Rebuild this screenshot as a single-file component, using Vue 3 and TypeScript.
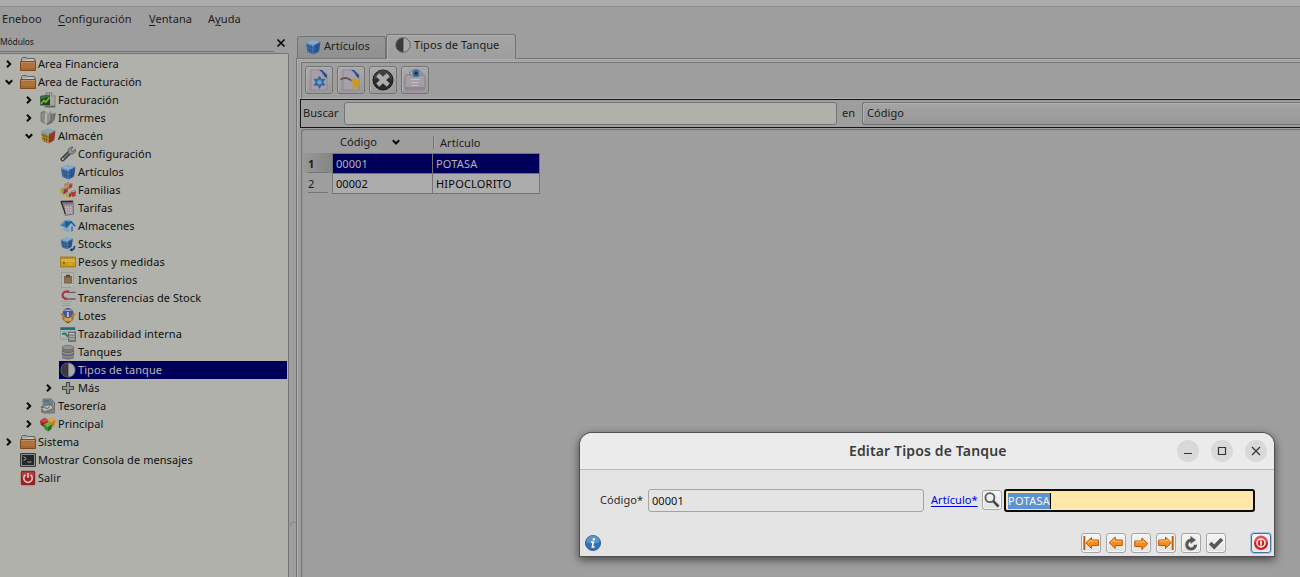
<script setup lang="ts">
interface TreeRow {
  label: string
  icon: string
  level: number
  arrow?: 'right' | 'down'
  selected?: boolean
}

const cubes = (left: string, top: string, right: string, line: string, shine: string): string =>
  `<path d="M.8 3.600 8.800 6.200v9.300L2.300 13z" fill="${left}"/><path d="M.8 3.600 7.500.8l8 2L8.800 6.200z" fill="${top}"/><path d="M8.800 6.200l6.700-3.400-1.300 9.400-5.400 3.300z" fill="${right}"/>` +
  `<path d="M1.300 6.700 8.800 9.300l6.300-3.400M1.800 9.900l7 2.600 5.900-3.400M3.500 4.500l1.100 9.300M6.100 5.300l.6 9.400M11.200 5v9M13.400 3.900l-.9 9.300" stroke="${line}" stroke-width=".7" fill="none"/>` +
  `<path d="M3 2.700l8 2.300M5.300 1.700l8 2.200M3.500 4.500l6.500-3M6.100 5.300l6.700-3.200M1.300 4.200l7.500 2.600" stroke="${shine}" stroke-width=".5" fill="none"/>`

const folder =
  '<path d="M1.500 6V2.500l1-1h4l.8 1h7l.7.8V6" fill="#a7a7a0" stroke="#62625e"/><path d="M3 4.500h11M8 3.500h5" stroke="#c4c4be"/><path d="M.5 5.500h15v9H.5z" fill="#ad733d" stroke="#85461a"/><path d="M1 6.500h14" stroke="#c28c58"/><path d="M1 13h14" stroke="#a05e27"/>'

const half =
  '<circle cx="8" cy="8" r="7.300" fill="#a9a9a9" stroke="#4b4b4b" stroke-width=".7"/><path d="M8 1a7 7 0 0 0 0 14z" fill="#3b3b3b"/><path d="M8 1v14" stroke="#2b2b2b" stroke-width=".7"/>'

const blue = cubes('#4673ab', '#6f9dc4', '#365f9e', '#234a82', '#9cbcd2')

const icons: Record<string, string> = {
  folder,
  half,
  blue,
  store: cubes('#b8942e', '#6796b0', '#a82f2c', '#6b4a22', '#a5bcc2'),
  invoice:
    '<path d="M6 .8h5.500l3.500 3V15H6z" fill="#a3a5a2" stroke="#686a68" stroke-width=".7"/><path d="M11.500.8v3H15" fill="#c6c6c2" stroke="#686a68" stroke-width=".6"/><path d="M.3 4 10 2.800v10.500L.3 13.500z" fill="#174a20"/><path d="M.3 4 10 2.800v2L.3 7.500z" fill="#3d6b43"/><path d="M1 12 4 8.500l1.800 1.500L9.500 5.500" stroke="#8eaa32" stroke-width="1.700" fill="none"/><path d="M4 15.300h11v-1.500H6z" fill="#5f615f"/>',
  reports:
    '<path d="M1 2.500 4.500 1.300 6 11.500l-2.500 1.500L1 11z" fill="#8a8c89" stroke="#666" stroke-width=".7"/><path d="M4.500 1.500 8 4.500v9L5.500 14 4 12z" fill="#b2b3b0" stroke="#757573" stroke-width=".6"/><path d="M8 6q1-4 3-4.500V10l-3 4z" fill="#9a9c99" stroke="#6d6d6d" stroke-width=".5"/><path d="M11 4.500 15.300 3.500Q15 10 12 12.500L7 14.800l4-4.800z" fill="#777976" stroke="#575757" stroke-width=".6"/>',
  wrench:
    '<path d="M2.700 13.300 9.500 6.500" stroke="#3e3f3e" stroke-width="4.400" stroke-linecap="round"/><path d="M3.500 12.500 10 6" stroke="#7d7f7c" stroke-width="1.300"/><path d="M8.500 7.800C7 4 9.300.7 13 1l-2 2.800 1.800 1.600 2.500-2.200c.8 3.400-2 6-6.800 4.600z" fill="#8e908d" stroke="#555" stroke-width=".8"/><circle cx="2.900" cy="13" r="1.100" fill="#b0b1aa"/>',
  families:
    '<path d="M4.500 2 8 .5l4.500 1-.4 4L8.500 7 5 5.500z" fill="#ba3d34"/><path d="M4.500 2 8 .5l4.500 1L9 3z" fill="#739fb8"/><path d="M4.500 2 9 3l-.5 4L5 5.500z" fill="#bf9631"/><path d="M0 6.500l3.500 1-.2 5L.8 11z" fill="#c1982f"/><path d="M0 6.500 4 5l4 1-4.500 1.500z" fill="#7ba2b5"/><path d="M3.500 7.500 8 6l-.5 4.500-4.200 2z" fill="#aa3330"/><path d="M5.500 11l3.500 1v3.500L6 14.500z" fill="#c79b31"/><path d="M5.500 11 8.500 9.500l3 1L9 12z" fill="#86a9b7"/><path d="M9 12l2.500-1.500-.3 3.800L9 15.500z" fill="#a92e2d"/><path d="M11 9.500l3-1.500 2 1-.5 5-2.500 1-1.500-1z" fill="#ad3834"/><path d="M11 9.500 13.500 8l2.500 1-2.500 1.200z" fill="#85a9bb"/>',
  calc:
    '<path d="M1.500 1.500 13 1l.7 13L5.300 15.500 3.800 6z" fill="#a0929f" stroke="#665b64" stroke-width=".7"/><path d="M1 1.300 12.800.8v3.400L4.500 5z" fill="#82757f"/><path d="M.8 1.500h12M1 1.500 5.500 14" stroke="#2b2832" stroke-width="1.300"/><path d="M5 7.500h7.500M5.200 10h7.500M5.700 12.500h7" stroke="#cbbfca" stroke-width="1.300" stroke-dasharray="1.500 1"/>',
  house:
    '<path d="M3.500 7 9 8v6.500l-5.500-2z" fill="#8da5ba"/><path d="M9 8.500 12 5l2.500 3v5L9 14.500z" fill="#9bb1c1"/><path d="M0 7.300 5 2l6.500 1L5.800 9.500z" fill="#3a7ab3"/><path d="M5 2 11.500 3 16 8l-1.700.5L11.300 5 6.500 10l-.7-.7z" fill="#215b94"/><path d="M1.500 6.500 5.500 2.500l4.500.8" fill="none" stroke="#76a9cf"/><path d="M11 8.500h2V13l-2 .6z" fill="#4f7ea9"/>',
  stock:
    '<g transform="translate(0 .5) scale(.83)">' + blue + '</g><path d="M10.500 14q4 .2 4-4" stroke="#173b7c" stroke-width="1.600" fill="none"/><path d="m9.500 14 2.800-2.200v4z" fill="#173b7c"/>',
  ruler:
    '<path d="M.4 3h15.200v10H.4z" fill="#c99918" stroke="#91711a" stroke-width=".8"/><path d="M1 5h14v3H1z" fill="#d9b23a"/><path d="M2.500 3v2M4.500 3v2M6.500 3v2M8.500 3v2M10.500 3v2M12.500 3v2" stroke="#9b7719" stroke-width=".7"/><circle cx="3.800" cy="8.700" r="1.100" fill="#8d571f"/><path d="M8 10h5" stroke="#e2c86d" stroke-width=".6"/>',
  inventory:
    '<path d="M1.500.5h12v11l-3.500 4H1.500z" fill="#b6b6b1" stroke="#92938e" stroke-width=".7"/><path d="M13.500 11.500H10v4" fill="#cfcfca" stroke="#888984" stroke-width=".6"/><path d="M4 4h8v7.500H4z" fill="#7b6548"/><path d="M6 2.700h4V5H6z" fill="#514840"/><path d="M5.200 6h5.600v4.500H5.200z" fill="#8c7350"/>',
  transfer:
    '<path d="M1 11.500h11M2 13.700h8M1 15.500h10" stroke="#a097a2" stroke-width=".9"/><path d="M7 2.300h8.500M4 9h11.500" stroke="#665c69" stroke-width="1.300"/><path d="M9 1.400C.8.300.8 8.800 7 8.700" fill="none" stroke="#a93842" stroke-width="2.200"/>',
  lots:
    '<circle cx="8" cy="5.500" r="5" fill="#46569e" stroke="#30376e" stroke-width=".7"/><path d="M4.500 2.300h7" stroke="#a1aec9" stroke-width="1.300"/><path d="M7 4h1.800v5H7z" fill="#bbc1d0"/><path d="M.3 5.500 3.500 5 5 9l3 1 3-1 1.500-4 3.200.5-2 2.500v3.500L8 15l-5.700-3.500V8z" fill="#a8742b"/><path d="M4.500 9.300 8 10.500l3.500-1.200v3L8 14l-3.500-1.700z" fill="#d0a352"/><path d="M3 12q5 3 10 0l-5 3.500z" fill="#75501f"/>',
  trace:
    '<path d="M.5 1.500h14.500v12H.5z" fill="#b1b7b5" stroke="#839092" stroke-width=".6"/><path d="M.5 1.300h14.500v2.700H.5z" fill="#256d7a"/><path d="M2 5.800h7M2 12h5" stroke="#8fa6a5"/><path d="M2 8 5 7.500l3 3" stroke="#287b63" stroke-width="2" fill="none"/><path d="M8.500 6h7v9.500h-7z" fill="#777b7e" stroke="#515558" stroke-width=".6"/><path d="M9.500 7.700h5" stroke="#bdc8cc" stroke-width="1.400"/><path d="M9.500 10.500h5M9.500 13h5" stroke="#c4c6c4" stroke-dasharray="1.200 .7" stroke-width="1.500"/>',
  tank:
    '<path d="M2 3.500v9.800C2 16.200 14 16.200 14 13.300V3.500z" fill="#777"/><ellipse cx="8" cy="3.500" rx="6" ry="2.200" fill="#929292" stroke="#656565" stroke-width=".6"/><path d="M2 6.500c0 3 12 3 12 0M2 10c0 3 12 3 12 0" fill="none" stroke="#4c4c4c" stroke-width=".8"/><path d="M2.500 7.600c1 2.400 10 2.400 11 0M2.500 11.100c1 2.400 10 2.400 11 0" fill="none" stroke="#aaa" stroke-width=".8"/>',
  plus: '<path d="M6.500 2.500h3v4h4v3h-4v4h-3v-4h-4v-3h4z" fill="#969891" stroke="#484945" stroke-width="1.100"/>',
  treasury:
    '<path d="M3 1h8l3.500 3.500V15H3z" fill="#8b9294" stroke="#55595a" stroke-width=".7"/><path d="M3.500 1.500H10L13 4.500v2l-9.500.5z" fill="#67818f"/><path d="M1 9 10.500 6l3 4.500L4 14z" fill="#b9bab3" stroke="#565957" stroke-width=".8"/><path d="m1 9 7 1.500L10.500 6M4 3h5" fill="none" stroke="#4d5b5f" stroke-width=".8"/><path d="M1 11v3.500h11l2-3.500-9 2.500z" fill="#74797a"/>',
  main:
    '<path d="m0 4.500.8 4.500 4 2.500L8 8.500V4.500L3.500 6z" fill="#a02422"/><path d="m0 4.500 4.500-3L8.500 4l-4 2.700z" fill="#c94843"/><path d="m8 4.500 3 2 4.500-3-.8 5.500-4 3L8 9z" fill="#bf7d1f"/><path d="m8 4 4-3 3.500 2.500-4.500 3z" fill="#dda341"/><path d="m4 8.500 4 2.500v4.500l-3.500-2.500z" fill="#319029"/><path d="m4 8.500 4-2.700 4 2.700-4 2.700z" fill="#69b14a"/><path d="m8 11 4-2.500-.5 4.500L8 15.500z" fill="#1c701f"/>',
  console:
    '<path d="M.5 1.500h15v13H.5z" fill="#8a8b87" stroke="#3a3b39"/><path d="M2 3h12v10H2z" fill="#25282b"/><path d="m3.500 4.500 2.700 2.200-2.700 2M7.500 10h4" stroke="#a7aba8" fill="none"/>',
  exit:
    '<rect x="1.300" y="1.300" width="13.400" height="13.400" rx=".8" fill="#a91b22" stroke="#8b1d20"/><path d="M2 2h12v5H2z" fill="#b5383c"/><path d="M5.500 4.800a4.200 4.200 0 1 0 5 0" fill="none" stroke="#c8c4bf" stroke-width="1.700"/><path d="M8 3v5" stroke="#c8c4bf" stroke-width="1.700"/>',
  first: '<path d="M1.300 1v14" stroke="#c65f0b" stroke-width="2"/><path d="m2.800 8 5.700-5.500V5h7v5.500h-7v3z" fill="#f88b17" stroke="#b95b0a"/><path d="M5 7.400 8 5v1.200h6.500" stroke="#ffc16f" fill="none"/>',
  prev: '<path d="m1.200 7.700 6-5.700v3h7v5.500h-7v3z" fill="#f88b17" stroke="#b95b0a"/><path d="M3 7.400 6.300 4.300v2h7" stroke="#ffc16f" fill="none"/>',
  next: '<path d="m14.800 8.700-6-5.700v3h-7v5.500h7v3z" fill="#f88b17" stroke="#b95b0a"/><path d="M2.800 7h7V5.500l3 2.800" stroke="#ffc16f" fill="none"/>',
  last: '<path d="M14.700 1v14" stroke="#c65f0b" stroke-width="2"/><path d="M13.200 7.700 7.500 2v3H.7v5.500h6.800v3z" fill="#f88b17" stroke="#b95b0a"/><path d="M1.500 6h7V4.500l2.800 2.700" stroke="#ffc16f" fill="none"/>',
  reload:
    '<path d="M12.600 9.700A4.400 4.400 0 1 1 8.500 5.200" transform="translate(.8 .8)" fill="none" stroke="#fff" stroke-width="3.400"/><path d="M12.600 9.700A4.400 4.400 0 1 1 8.500 5.200" fill="none" stroke="#585858" stroke-width="3.200"/><path d="m7.500 1 5.500 4-5.500 4z" fill="#585858"/>',
  check: '<path d="m3 9 3.500 4L14.700 4.700" fill="none" stroke="#fff" stroke-width="3.500"/><path d="m2.200 8 4 4 7.800-8" fill="none" stroke="#585858" stroke-width="3.700"/>',
  power: '<circle cx="8" cy="8" r="7" fill="#d41919"/><path d="M1.500 7a6.500 6.500 0 0 1 13 0z" fill="#e8504d"/><circle cx="8" cy="8" r="4" fill="#dc1c1c" stroke="#fff" stroke-width="1.500"/><path d="M8 5.500v5" stroke="#fff" stroke-width="1.700"/>',
  search: '<circle cx="5.900" cy="5.600" r="4.500" fill="#eee" stroke="#5a5a5a" stroke-width="1.800"/><path d="m9.300 9.200 5.200 5.300" stroke="#444" stroke-width="2.600"/>',
  info: '<circle cx="8" cy="8" r="7.600" fill="#3272ae" stroke="#265a89" stroke-width=".8"/><path d="M1.500 7a6.500 6.500 0 0 1 13 0q-6 3-13 0" fill="#5a93c8"/><circle cx="8.800" cy="4.300" r="1.200" fill="#fff"/><path d="M6 7h2.300l-1 5h2.400" fill="none" stroke="#fff" stroke-width="1.500"/>',
}

const toolIcons: string[] = [
  '<path d="M3 1h11l5 5v15H3z" fill="#a7a0aa" stroke="#8a8191" stroke-width=".8"/><path d="M11 1h3l5 5v3q-3-1-4-4-1-2-4-4z" fill="#254f94"/><path d="m11.500 7 1.800 3.200 3.700-.1-1.900 3.100 1.900 3.100-3.700-.1-1.800 3.200-1.800-3.200-3.700.1 1.900-3.100L6 10.100l3.700.1z" fill="#376fa7" stroke="#2a5a90" stroke-width=".6"/><circle cx="11.500" cy="13.200" r="2" fill="#7ba6c4"/>',
  '<path d="M3 1h11l5 5v15H3z" fill="#a7a0aa" stroke="#8a8191" stroke-width=".8"/><path d="M11 1h3l5 5v3q-3-1-4-4-1-2-4-4z" fill="#254f94"/><path d="M.5 10.500q5-3 9.500 0l4 2" stroke="#5f5752" stroke-width="1.800" fill="none"/><path d="M11 10q8-2 8.500 4 0 6.500-9 5.500 4-2 2.500-5-1-2-2-4.500z" fill="#c79c21"/>',
  '<circle cx="11" cy="11" r="10" fill="#2a2a2b" stroke="#181819"/><path d="M2 10a9 9 0 0 1 18 0z" fill="#414142"/><path d="m5.800 5.800 10.400 10.400m0-10.400L5.800 16.200" stroke="#b0abae" stroke-width="4.500"/>',
  '<rect x="1" y="6" width="20" height="15" rx="2.500" fill="#a69ea7" stroke="#857c88"/><path d="M2 19h18" stroke="#8e8590" stroke-width="2"/><path d="M7 10.500h9M7 13.500h8M8 16.500h6" stroke="#c2bbc2" stroke-width="1"/><path d="M5 4.500q7-8 13.500 0-6.500 6.500-13.500 0z" fill="#a4b0b7" stroke="#626d78" stroke-width=".8"/><circle cx="12" cy="4.300" r="3.500" fill="#326da1"/><circle cx="12" cy="4.300" r="1.500" fill="#142f52"/>',
]

const rows: TreeRow[] = [
  { label: 'Area Financiera', icon: 'folder', level: 0, arrow: 'right' },
  { label: 'Area de Facturación', icon: 'folder', level: 0, arrow: 'down' },
  { label: 'Facturación', icon: 'invoice', level: 1, arrow: 'right' },
  { label: 'Informes', icon: 'reports', level: 1, arrow: 'right' },
  { label: 'Almacén', icon: 'store', level: 1, arrow: 'down' },
  { label: 'Configuración', icon: 'wrench', level: 2 },
  { label: 'Artículos', icon: 'blue', level: 2 },
  { label: 'Familias', icon: 'families', level: 2 },
  { label: 'Tarifas', icon: 'calc', level: 2 },
  { label: 'Almacenes', icon: 'house', level: 2 },
  { label: 'Stocks', icon: 'stock', level: 2 },
  { label: 'Pesos y medidas', icon: 'ruler', level: 2 },
  { label: 'Inventarios', icon: 'inventory', level: 2 },
  { label: 'Transferencias de Stock', icon: 'transfer', level: 2 },
  { label: 'Lotes', icon: 'lots', level: 2 },
  { label: 'Trazabilidad interna', icon: 'trace', level: 2 },
  { label: 'Tanques', icon: 'tank', level: 2 },
  { label: 'Tipos de tanque', icon: 'half', level: 2, selected: true },
  { label: 'Más', icon: 'plus', level: 2, arrow: 'right' },
  { label: 'Tesorería', icon: 'treasury', level: 1, arrow: 'right' },
  { label: 'Principal', icon: 'main', level: 1, arrow: 'right' },
  { label: 'Sistema', icon: 'folder', level: 0, arrow: 'right' },
  { label: 'Mostrar Consola de mensajes', icon: 'console', level: 0 },
  { label: 'Salir', icon: 'exit', level: 0 },
]

const navButtons: string[] = ['first', 'prev', 'next', 'last', 'reload', 'check']
</script>

<template>
  <div class="window">
    <div class="strip"></div>
    <nav class="menubar">
      <span class="m1">Eneboo</span>
      <span class="m2"><u>C</u>onfiguración</span>
      <span class="m3"><u>V</u>entana</span>
      <span class="m4">A<u>y</u>uda</span>
    </nav>
    <div class="main">
      <aside class="side">
        <header class="side-head">
          <span>Módulos</span>
          <svg width="10" height="10" viewBox="0 0 10 10"><path d="m1.500 1.500 7 7m0-7-7 7" stroke="#0b0b0b" stroke-width="1.700" /></svg>
        </header>
        <div class="tree">
          <div v-for="r in rows" :key="r.label" class="row" :class="'l' + r.level">
            <span class="arrow">
              <svg v-if="r.arrow" width="8" height="8" viewBox="0 0 8 8">
                <path :d="r.arrow === 'right' ? 'M2 .8 5.200 4 2 7.200' : 'M.8 2.300 4 5.500 7.200 2.300'" fill="none" stroke="#0a0a0a" stroke-width="2" />
              </svg>
            </span>
            <span class="item" :class="{ selected: r.selected }">
              <svg class="ico" width="16" height="16" viewBox="0 0 16 16" v-html="icons[r.icon]"></svg>
              <span class="label">{{ r.label }}</span>
            </span>
          </div>
        </div>
      </aside>
      <div class="splitter">
        <svg width="6" height="6" viewBox="0 0 6 6"><path d="M1 5V2.500L2.500 1H4.500l.8 1" fill="none" stroke="#808080" /></svg>
      </div>
      <section class="content">
        <div class="tabs">
          <div class="tab">
            <svg width="16" height="16" viewBox="0 0 16 16" v-html="icons.blue"></svg>
            <span>Artículos</span>
          </div>
          <div class="tab active">
            <svg width="16" height="16" viewBox="0 0 16 16" v-html="icons.half"></svg>
            <span>Tipos de Tanque</span>
          </div>
        </div>
        <div class="page">
          <div class="toolbar">
            <button v-for="(t, i) in toolIcons" :key="i" class="tool">
              <svg width="22" height="22" viewBox="0 0 22 22" v-html="t"></svg>
            </button>
          </div>
          <div class="searchbar">
            <span class="buscar">Buscar</span>
            <div class="query"></div>
            <span class="en">en</span>
            <div class="combo">Código</div>
          </div>
          <div class="grid-frame">
            <div class="head">
              <span class="h-code">Código</span>
              <svg width="8" height="8" viewBox="0 0 8 8"><path d="M.8 2.300 4 5.500 7.200 2.300" fill="none" stroke="#0a0a0a" stroke-width="2" /></svg>
              <span class="h-art">Artículo</span>
            </div>
            <div class="record current">
              <span class="num">1</span><span class="code">00001</span><span class="art">POTASA</span>
            </div>
            <div class="record">
              <span class="num">2</span><span class="code">00002</span><span class="art">HIPOCLORITO</span>
            </div>
          </div>
        </div>
      </section>
    </div>

    <div class="dialog">
      <header class="titlebar">
        <span class="title">Editar Tipos de Tanque</span>
        <div class="controls">
          <span class="ctl"><svg width="10" height="10" viewBox="0 0 10 10"><path d="M1 7.500h8" stroke="#333" /></svg></span>
          <span class="ctl"><svg width="10" height="10" viewBox="0 0 10 10"><path d="M1.500 1.500h7v7h-7z" fill="none" stroke="#333" stroke-width="1.200" /></svg></span>
          <span class="ctl"><svg width="10" height="10" viewBox="0 0 10 10"><path d="m1 1 8 8m0-8L1 9" stroke="#333" stroke-width="1.200" /></svg></span>
        </div>
      </header>
      <div class="form">
        <span class="f-label">Código*</span>
        <div class="field readonly">00001</div>
        <a class="f-link">Artículo*</a>
        <button class="mini"><svg width="16" height="16" viewBox="0 0 16 16" v-html="icons.search"></svg></button>
        <div class="field focus"><span class="marked">POTASA</span></div>
      </div>
      <footer class="actions">
        <svg class="info" width="16" height="16" viewBox="0 0 16 16" v-html="icons.info"></svg>
        <button v-for="n in navButtons" :key="n" class="mini">
          <svg width="16" height="16" viewBox="0 0 16 16" v-html="icons[n]"></svg>
        </button>
        <button class="mini close"><svg width="16" height="16" viewBox="0 0 16 16" v-html="icons.power"></svg></button>
      </footer>
    </div>
  </div>
</template>

<style>
body {
  margin: 0;
  overflow: hidden;
}
</style>

<style scoped>
.window {
  position: relative;
  width: 1300px;
  height: 577px;
  overflow: hidden;
  display: flex;
  flex-direction: column;
  background: #9e9e9e;
  color: #1c1c1c;
  font: 11px/18px "Noto Sans", sans-serif;
  letter-spacing: 0.07px;
  white-space: nowrap;
}
.window *,
.window *::before {
  box-sizing: border-box;
}
svg {
  display: block;
  flex: none;
}
button {
  padding: 0;
  font: inherit;
}
.strip {
  height: 7px;
  flex: none;
  background: #acacac;
  border-bottom: 1px solid #8e8e8e;
}
.menubar {
  height: 29px;
  flex: none;
  display: flex;
  padding: 3px 0 0 2px;
}
.menubar u {
  text-underline-offset: 2px;
}
.m1 { width: 56px; }
.m2 { width: 91px; }
.m3 { width: 59px; }
.main {
  flex: 1;
  min-height: 0;
  display: flex;
}
.side {
  width: 289px;
  display: flex;
  flex-direction: column;
}
.side-head {
  height: 17px;
  flex: none;
  display: flex;
  justify-content: space-between;
  padding-right: 3px;
  line-height: 12px;
  font-size: 8.500px;
  letter-spacing: -0.15px;
  background: linear-gradient(#747474, #747474) 0 15px / 274px 1px no-repeat;
}
.side-head svg {
  margin-top: 2px;
}
.tree {
  flex: 1;
  padding-top: 1px;
  border-top: 1px solid #747474;
  border-right: 1px solid #747474;
  border-top-right-radius: 2px;
  background: #b0b1aa;
  color: #101010;
}
.row {
  height: 18px;
  display: flex;
}
.l1 { padding-left: 20px; }
.l2 { padding-left: 40px; }
.arrow {
  width: 19px;
  flex: none;
  padding: 5px 0 0 5px;
}
.item {
  flex: 1;
  display: flex;
  align-items: center;
  margin-right: 1px;
}
.item .ico {
  margin-left: 1px;
}
.label {
  margin-left: 2px;
}
.selected {
  background: #00005a;
  color: #b8b8b8;
}
.splitter {
  width: 7px;
  padding: 485px 0 0 1px;
}
.content {
  flex: 1;
  display: flex;
  flex-direction: column;
}
.tabs {
  height: 22px;
  display: flex;
  align-items: flex-end;
  padding-left: 1px;
}
.tab {
  width: 89px;
  height: 22px;
  display: flex;
  align-items: center;
  gap: 3px;
  padding: 0 0 1px 7px;
  border: 1px solid #747474;
  border-bottom: 0;
  border-radius: 3px 3px 0 0;
  background: linear-gradient(#979797, #909090);
}
.tab span {
  margin-top: -2px;
}
.tab.active {
  width: 130px;
  height: 25px;
  margin-bottom: -1px;
  z-index: 1;
  padding: 0 0 4px 8px;
  background: linear-gradient(#a5a5a5, #9e9e9e);
  box-shadow: inset 1px 1px #b0b0b0;
}
.tab.active span {
  margin-top: 0;
}
.page {
  flex: 1;
  border-top: 1px solid #747474;
  border-left: 1px solid #747474;
  box-shadow: inset 1px 1px #b0b0b0;
  padding: 3px 0 0 3px;
}
.toolbar {
  height: 37px;
  display: flex;
  gap: 4px;
  padding: 3px 0 0 3px;
  margin-left: 1px;
  border: 1px solid #747474;
  border-right: 0;
  border-bottom: 1px solid #b0b0b0;
  box-shadow: 0 0 0 1px #adadad;
}
.tool {
  width: 28px;
  height: 28px;
  display: flex;
  align-items: center;
  justify-content: center;
  border: 1px solid #747474;
  border-radius: 3px;
  background: linear-gradient(#a8a8a8, #9a9a9a);
  box-shadow: inset 1px 1px #b0b0b0;
}
.searchbar {
  height: 29px;
  display: flex;
  align-items: center;
  border: 1px solid #151515;
  border-right: 0;
  padding-left: 2px;
}
.buscar {
  width: 41px;
  margin-top: -2px;
}
.query {
  width: 493px;
  height: 23px;
  border: 1px solid #747474;
  border-radius: 3px;
  background: #b0b1aa;
}
.en {
  width: 25px;
  margin-top: -2px;
  padding-left: 5px;
}
.combo {
  flex: 1;
  height: 23px;
  padding: 1px 0 0 4px;
  border: 1px solid #747474;
  border-right: 0;
  border-radius: 3px 0 0 3px;
  background: linear-gradient(#a5a5a5, #979797);
  box-shadow: inset 1px 1px #afafaf;
}
.grid-frame {
  height: 460px;
  margin: 1px 0 0 1px;
  border: 1px solid #747474;
  border-right: 0;
  border-radius: 3px 0 0;
  box-shadow: inset 1px 1px #999;
  padding: 3px 0 0 1px;
}
.head {
  height: 20px;
  display: flex;
  align-items: center;
  padding: 0 0 2px 37px;
}
.h-code { width: 52px; }
.h-art {
  height: 13px;
  line-height: 13px;
  margin-left: 33px;
  padding-left: 6px;
  border-left: 1px solid #747474;
  box-shadow: inset 1px 0 #aaa;
}
.record {
  height: 20px;
  display: flex;
  line-height: 20px;
}
.num {
  width: 29px;
  padding-left: 5px;
  line-height: 22px;
  position: relative;
}
.num::before {
  content: "";
  position: absolute;
  left: 5px;
  right: 4px;
  bottom: 0;
  height: 1px;
  background: #747474;
}
.code,
.art {
  height: 21px;
  border: 1px solid #747474;
  background: #acacac;
  color: #090909;
  padding-left: 3px;
}
.code { width: 101px; }
.art {
  width: 108px;
  margin-left: -1px;
  letter-spacing: 0.2px;
}
.current .num {
  font-weight: 700;
  background: linear-gradient(90deg, #989898, #858585);
}
.current .code,
.current .art {
  background: #00005a;
  color: #b4b4b4;
}
.dialog {
  position: absolute;
  left: 580px;
  top: 433px;
  width: 694px;
  height: 123px;
  display: flex;
  flex-direction: column;
  background: #e4e4e4;
  border-radius: 12px 12px 0 0;
  box-shadow: 0 0 0 1px #505050, 0 3px 9px 1px rgba(0, 0, 0, 0.55);
}
.titlebar {
  height: 37px;
  flex: none;
  display: flex;
  align-items: center;
  justify-content: flex-end;
  padding-right: 7px;
  border-bottom: 1px solid #b9b9b9;
  border-radius: 12px 12px 0 0;
  background: #ebebeb;
}
.title {
  width: 158px;
  margin-right: 170px;
  font-size: 14px;
  font-weight: 600;
  letter-spacing: 0.14px;
  color: #3b3b3b;
}
.controls {
  display: flex;
  gap: 12px;
}
.ctl {
  width: 22px;
  height: 22px;
  display: flex;
  align-items: center;
  justify-content: center;
  border-radius: 50%;
  background: #d9d9d9;
}
.form {
  height: 23px;
  margin-top: 19px;
  padding-left: 20px;
  display: flex;
  align-items: center;
}
.f-label {
  width: 48px;
  margin-top: -2px;
  color: #2c2c2c;
}
.field {
  height: 23px;
  display: flex;
  align-items: center;
  padding: 1px 0 0 3px;
  border: 1px solid #a4a4a4;
  border-radius: 3px;
}
.readonly {
  width: 276px;
  color: #111;
}
.f-link {
  width: 51px;
  margin: -2px 0 0 7px;
  color: #0000e8;
  text-decoration: underline;
  text-underline-offset: 2px;
}
.mini {
  width: 20px;
  height: 20px;
  flex: none;
  display: flex;
  align-items: center;
  justify-content: center;
  border: 1px solid #a6a6a6;
  border-radius: 3px;
  background: linear-gradient(#f5f5f5, #e2e2e2);
  box-shadow: inset 0 0 0 1px #f6f6f6;
}
.form .mini {
  margin-top: -1px;
}
.focus {
  width: 251px;
  margin-left: 2px;
  border: 2px solid #0c0c0c;
  padding: 0 0 0 2px;
  background: #ffe7ab;
}
.marked {
  height: 16px;
  line-height: 16px;
  background: #5c93cf;
  color: #f5f5f5;
  letter-spacing: 0.3px;
  border-right: 1px solid #000;
}
.actions {
  height: 20px;
  margin-top: 21px;
  padding: 0 3px 0 5px;
  display: flex;
  align-items: center;
  gap: 5px;
}
.info {
  margin-right: auto;
}
.close {
  margin-left: 20px;
  border-color: #43709f;
  box-shadow: 0 0 0 1px #a8c2dd, inset 0 0 0 1px #e9f0f6;
}
</style>
